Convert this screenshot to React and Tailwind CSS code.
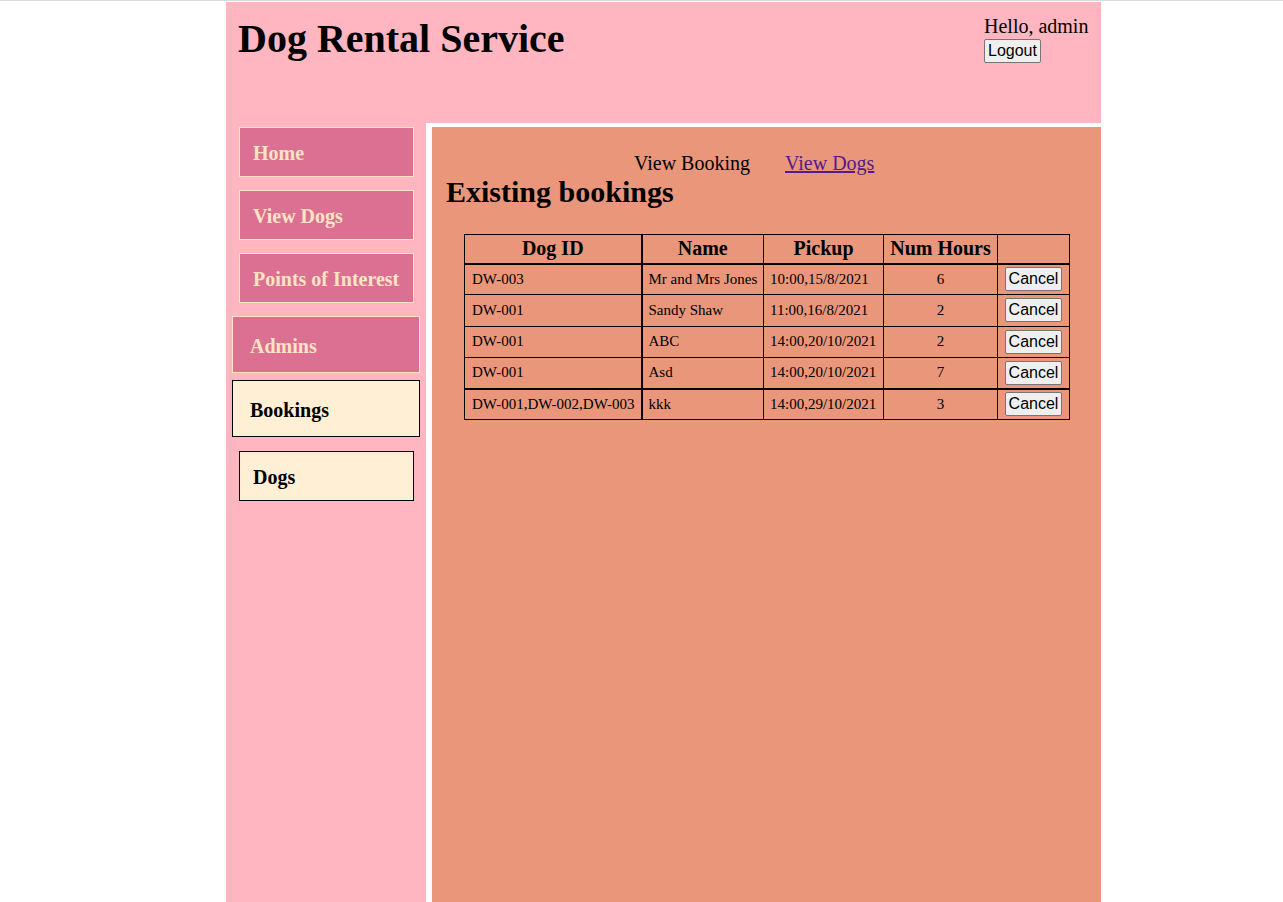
const MENU = [
  { label: 'Home',               big: false, active: false, mt: 'mt-0' },
  { label: 'View Dogs',          big: false, active: false, mt: 'mt-[13px]' },
  { label: 'Points of Interest', big: false, active: false, mt: 'mt-[13px]' },
  { label: 'Admins',             big: true,  active: false, mt: 'mt-[13px]' },
  { label: 'Bookings',           big: true,  active: true,  mt: 'mt-[7px]' },
  { label: 'Dogs',               big: false, active: true,  mt: 'mt-[14px]' },
]

const BOOKINGS = [
  { dogs: 'DW-003', name: 'Mr and Mrs Jones', pickup: '10:00,15/8/2021', hours: 6 },
  { dogs: 'DW-001', name: 'Sandy Shaw',       pickup: '11:00,16/8/2021', hours: 2 },
  { dogs: 'DW-001', name: 'ABC',              pickup: '14:00,20/10/2021', hours: 2 },
  { dogs: 'DW-001', name: 'Asd',              pickup: '14:00,20/10/2021', hours: 7, thick: true },
  { dogs: 'DW-001,DW-002,DW-003', name: 'kkk', pickup: '14:00,29/10/2021', hours: 3 },
]

const serif = "font-['Liberation_Serif','Times_New_Roman',serif]"
const btn = "font-['Liberation_Sans',Arial,sans-serif] text-[16px] leading-[20px] px-[3px] py-[1px] bg-[#efefef] border border-[#767676] rounded-[2px] text-black"

function MenuItem({ item }) {
  const size = item.big ? 'ml-[6px] w-[188px] h-[57px] pl-[17px]' : 'ml-[13px] w-[175px] h-[50px] pl-[13px]'
  const look = item.active
    ? 'bg-[#FFEFD5] border-black text-black'
    : 'bg-[#DB7093] border-[#FFE4C4] text-[#FFE4C4]'
  return (
    <div className={`${item.mt} ${size} ${look} border flex items-center pt-[3px] text-[20px] font-bold leading-[23px]`}>
      {item.label}
    </div>
  )
}

export default function App() {
  return (
    <div className={`min-h-[902px] bg-white border-t border-[#dadada] ${serif} text-black`}>
      <div className="ml-[226px] w-[875px] pt-[1px]">
        {/* Header */}
        <header className="h-[121px] bg-[#FFB6C1] flex justify-between">
          <h1 className="pl-[12px] pt-[14px] text-[40px] font-bold leading-[45px]">Dog Rental Service</h1>
          <div className="w-[117px] pt-[13px] text-[20px] leading-[23px]">
            <div>Hello, admin</div>
            <button className={`${btn} py-[1.5px]`}>Logout</button>
          </div>
        </header>

        <div className="flex min-h-[779px]">
          {/* Sidebar */}
          <nav className="w-[200px] bg-[#FFB6C1] pt-[4px] flex flex-col">
            {MENU.map(m => <MenuItem key={m.label} item={m} />)}
          </nav>

          {/* Main */}
          <main className="ml-[6px] mt-[4px] flex-1 bg-[#E9967A] pt-[25px] pl-[14px]">
            <div className="flex gap-[35px] pl-[188px] text-[20px] leading-[23px]">
              <span>View Booking</span>
              <a href="#" className="underline text-[#551A8B]">View Dogs</a>
            </div>
            <h2 className="text-[30px] font-bold leading-[34px]">Existing bookings</h2>

            <table className="mt-[25px] ml-[18px] w-[605px] table-fixed border-collapse">
              <colgroup>
                <col className="w-[177px]" />
                <col className="w-[122px]" />
                <col className="w-[120px]" />
                <col className="w-[114px]" />
                <col className="w-[72px]" />
              </colgroup>
              <thead>
                <tr className="h-[29px] text-[20px] leading-[23px]">
                  <th className="border border-black border-b-2 border-r-2 font-bold">Dog ID</th>
                  <th className="border border-black border-b-2 font-bold">Name</th>
                  <th className="border border-black border-b-2 font-bold">Pickup</th>
                  <th className="border border-black border-b-2 font-bold">Num Hours</th>
                  <th className="border border-black border-b-2"></th>
                </tr>
              </thead>
              <tbody className="text-[15px] leading-[17px]">
                {BOOKINGS.map((b, i) => {
                  const bb = b.thick ? 'border-b-2' : ''
                  return (
                    <tr key={i} className="h-[31.25px]">
                      <td className={`border border-black border-r-2 ${bb} px-[7px] whitespace-nowrap`}>{b.dogs}</td>
                      <td className={`border border-black ${bb} px-[6px] whitespace-nowrap`}>{b.name}</td>
                      <td className={`border border-black ${bb} px-[6px] whitespace-nowrap`}>{b.pickup}</td>
                      <td className={`border border-black ${bb} text-center`}>{b.hours}</td>
                      <td className={`border border-black ${bb} text-center`}>
                        <button className={btn}>Cancel</button>
                      </td>
                    </tr>
                  )
                })}
              </tbody>
            </table>
          </main>
        </div>
      </div>
    </div>
  )
}
